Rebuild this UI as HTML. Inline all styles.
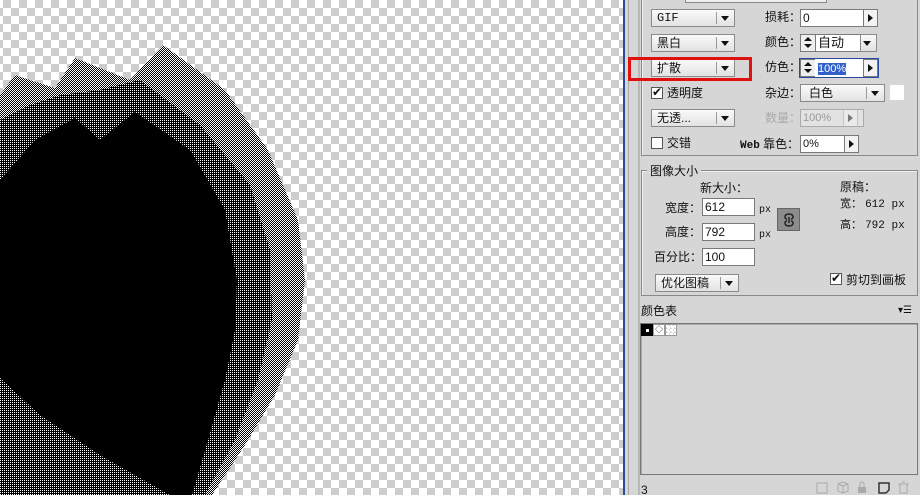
<!DOCTYPE html>
<html><head><meta charset="utf-8"><style>
*{margin:0;padding:0;box-sizing:border-box}
body{width:920px;height:495px;overflow:hidden;position:relative;font-family:"Liberation Sans","Noto Sans CJK SC",sans-serif;font-size:12px;color:#111}
.chk{position:absolute;left:0;top:0;width:623px;height:495px;background-color:#fff;background-image:linear-gradient(45deg,#cdcdcd 25%,transparent 25%,transparent 75%,#cdcdcd 75%),linear-gradient(45deg,#cdcdcd 25%,transparent 25%,transparent 75%,#cdcdcd 75%);background-size:16px 16px;background-position:-5px 0,3px 8px}
.panel{position:absolute;left:625px;top:0;width:295px;height:495px;background:#d6d6d6}
.a{position:absolute}
.grp{position:absolute;border:1px solid #8a8a8a;box-shadow:inset 1px 1px 0 #f0f0f0}
.dd{position:absolute;height:18px;border:1px solid #8a8a8a;background:linear-gradient(#fafafa,#e2e2e2);font-size:12px;line-height:16px;padding-left:5px}
.dd .sep{position:absolute;right:17px;top:2px;bottom:2px;width:1px;background:#999}
.dd .tri{position:absolute;right:5px;top:6px;width:0;height:0;border-left:4px solid transparent;border-right:4px solid transparent;border-top:5px solid #111}
.fld{position:absolute;height:18px;border:1px solid #7a7a7a;background:#fff;font-size:12px;line-height:16px;padding-left:2px}
.btn{position:absolute;width:15px;height:18px;border:1px solid #7a7a7a;background:#f2f2f2}
.btn:after{content:"";position:absolute;left:4px;top:4px;border-top:4px solid transparent;border-bottom:4px solid transparent;border-left:5px solid #111}
.lbl{position:absolute;font-size:12px;line-height:16px}
.spin{position:absolute;width:16px;height:18px;border:1px solid #7a7a7a;background:#eee}
.spin:before{content:"";position:absolute;left:3px;top:2px;border-left:4px solid transparent;border-right:4px solid transparent;border-bottom:4px solid #111}
.spin:after{content:"";position:absolute;left:3px;top:9px;border-left:4px solid transparent;border-right:4px solid transparent;border-top:4px solid #111}
.cb{position:absolute;width:12px;height:12px;border:1px solid #555;background:#fff;font-size:12px;line-height:9px;text-align:center}
</style></head><body>
<div class="chk"></div>
<svg class="a" style="left:0;top:0" width="623" height="495" shape-rendering="crispEdges">
<defs>
<pattern id="d1" width="2" height="2" patternUnits="userSpaceOnUse"><rect width="2" height="2" fill="#000"/><rect width="1" height="1" fill="#fff"/><rect x="1" y="1" width="1" height="1" fill="#fff"/></pattern>
<pattern id="d2" width="2" height="2" patternUnits="userSpaceOnUse"><rect width="2" height="2" fill="#000"/><rect width="1" height="1" fill="#fff"/></pattern>
</defs>
<path d="M0,95 L15,75 L55,88 L75,58 L130,80 L163,45 L225,90 L268,150 L298,220 L305,280 L298,340 L275,395 L245,445 L212,495 L0,495 Z" fill="url(#d1)"/>
<path d="M0,120 L30,105 L60,95 L100,90 L140,80 L200,125 L250,185 L270,250 L272,320 L258,380 L235,440 L205,495 L0,495 Z" fill="url(#d2)"/>
<path d="M0,180 L35,140 L75,118 L100,140 L135,112 L190,150 L225,210 L237,280 L235,330 L225,380 L208,440 L192,495 L170,495 L100,455 L40,415 L0,378 Z" fill="#000"/>
</svg>
<div class="a" style="left:623px;top:0;width:2px;height:495px;background:#2a4a9a"></div>
<div class="panel"></div>
<div class="a" style="left:628px;top:0;width:1px;height:495px;background:#a8a8a8"></div>
<div class="a" style="left:638px;top:0;width:2px;height:495px;background:#b8b8b8"></div>
<div class="a" style="left:685px;top:0;width:142px;height:3px;border:1px solid #8a8a8a;border-top:none;background:#eee"></div>

<div class="grp" style="left:641px;top:-2px;width:277px;height:158px"></div>
<div class="dd" style="left:651px;top:9px;width:84px;font-family:'Liberation Mono',monospace">GIF<span class="sep"></span><span class="tri"></span></div>
<div class="dd" style="left:651px;top:34px;width:84px">黑白<span class="sep"></span><span class="tri"></span></div>
<div class="dd" style="left:651px;top:59px;width:84px">扩散<span class="sep"></span><span class="tri"></span></div>
<div class="a" style="left:628px;top:57px;width:124px;height:24px;border:3px solid #e01010"></div>
<div class="cb" style="left:651px;top:87px">✔</div><div class="lbl" style="left:667px;top:85px">透明度</div>
<div class="dd" style="left:651px;top:109px;width:84px">无透...<span class="sep"></span><span class="tri"></span></div>
<div class="cb" style="left:651px;top:137px"></div><div class="lbl" style="left:667px;top:135px">交错</div>

<div class="lbl" style="left:765px;top:9px">损耗：</div>
<div class="fld" style="left:800px;top:9px;width:64px">0</div><div class="btn" style="left:863px;top:9px"></div>
<div class="lbl" style="left:765px;top:34px">颜色：</div>
<div class="spin" style="left:800px;top:34px"></div><div class="fld" style="left:815px;top:34px;width:46px;font-size:13px">自动</div>
<div class="dd" style="left:860px;top:34px;width:17px;padding:0"><span class="tri"></span></div>
<div class="lbl" style="left:765px;top:59px">仿色：</div>
<div class="a" style="left:799px;top:58px;width:80px;height:20px;border:1px solid #2a4aa0"></div>
<div class="spin" style="left:800px;top:59px"></div><div class="fld" style="left:815px;top:59px;width:49px;border-color:#fff"><span style="background:#3060c8;color:#fff;font-size:11px">100%</span></div><div class="btn" style="left:863px;top:59px"></div>
<div class="lbl" style="left:765px;top:85px">杂边：</div>
<div class="dd" style="left:800px;top:84px;width:85px;padding-left:8px">白色<span class="sep"></span><span class="tri"></span></div>
<div class="a" style="left:890px;top:85px;width:14px;height:15px;background:#fff"></div>
<div class="lbl" style="left:765px;top:110px;color:#aaa">数量：</div>
<div class="fld" style="left:800px;top:109px;width:64px;background:#e2e2e2;border-color:#aaa;color:#999;font-size:11px">100%</div><div class="btn" style="left:843px;top:109px;border-color:#aaa;opacity:.5"></div>
<div class="lbl" style="left:740px;top:136px"><span style="font-family:'Liberation Mono',monospace;font-size:11px;font-weight:bold">Web</span> 靠色：</div>
<div class="fld" style="left:800px;top:135px;width:45px;font-size:11px">0%</div><div class="btn" style="left:844px;top:135px"></div>

<div class="grp" style="left:641px;top:170px;width:277px;height:126px"></div>
<div class="lbl" style="left:647px;top:163px;background:#d6d6d6;padding:0 3px">图像大小</div>
<div class="lbl" style="left:700px;top:180px">新大小：</div>
<div class="lbl" style="left:665px;top:200px">宽度：</div><div class="fld" style="left:702px;top:198px;width:53px">612</div><div class="lbl" style="left:759px;top:203px;font-size:10px;font-family:'Liberation Mono',monospace">px</div>
<div class="lbl" style="left:665px;top:224px">高度：</div><div class="fld" style="left:702px;top:223px;width:53px">792</div><div class="lbl" style="left:759px;top:228px;font-size:10px;font-family:'Liberation Mono',monospace">px</div>
<div class="lbl" style="left:654px;top:249px">百分比：</div><div class="fld" style="left:702px;top:248px;width:53px">100</div>
<div class="a" style="left:777px;top:208px;width:23px;height:23px;background:#8c8c8c;border:1px solid #666"></div>
<svg class="a" style="left:783px;top:212px" width="12" height="16"><path d="M4,7 C1,7 1,2 6,2 C11,2 11,7 8,7 M4,9 C1,9 1,14 6,14 C11,14 11,9 8,9 M6,5 V11" fill="none" stroke="#222" stroke-width="1.5"/></svg>
<div class="lbl" style="left:840px;top:179px">原稿：</div>
<div class="lbl" style="left:840px;top:196px;font-size:11px">宽： <span style="font-family:'Liberation Mono',monospace">612 px</span></div>
<div class="lbl" style="left:840px;top:217px;font-size:11px">高： <span style="font-family:'Liberation Mono',monospace">792 px</span></div>
<div class="dd" style="left:655px;top:274px;width:84px">优化图稿<span class="sep"></span><span class="tri"></span></div>
<div class="cb" style="left:830px;top:273px">✔</div><div class="lbl" style="left:846px;top:272px">剪切到画板</div>

<div class="lbl" style="left:641px;top:303px">颜色表</div>
<div class="lbl" style="left:898px;top:303px;font-size:10px">▾☰</div>
<div class="a" style="left:640px;top:323px;width:278px;height:152px;border:1px solid #777;box-shadow:inset 1px 1px 0 #aaa"></div>
<div class="a" style="left:641px;top:324px;width:12px;height:12px;background:#000"><div class="a" style="left:5px;top:5px;width:3px;height:3px;background:#fff"></div></div>
<div class="a" style="left:653px;top:324px;width:12px;height:12px;background:#fff;border:1px solid #999;font-size:8px;text-align:center;line-height:10px">◇</div>
<div class="a" style="left:665px;top:324px;width:12px;height:12px;background:#fff;border:1px solid #999;background-image:linear-gradient(45deg,#ccc 25%,transparent 25%,transparent 75%,#ccc 75%);background-size:4px 4px"></div>
<div class="lbl" style="left:641px;top:482px">3</div>
<svg class="a" style="left:815px;top:481px" width="100" height="14">
<rect x="2" y="2" width="10" height="10" fill="none" stroke="#aaa"/>
<path d="M23,3 L28,1 L33,3 L33,10 L28,12 L23,10 Z M23,3 L28,5 L33,3 M28,5 L28,12" fill="none" stroke="#aaa"/>
<rect x="43" y="6" width="8" height="6" fill="#aaa"/><path d="M45,6 V3 a2,2 0 0 1 4,0 V6" fill="none" stroke="#aaa"/>
<path d="M64,2 H74 V9 L71,12 H64 Z" fill="none" stroke="#333" stroke-width="1.5"/>
<path d="M83,3 H94 M85,3 V12 H92 V3 M87,1 H90" fill="none" stroke="#aaa"/>
</svg>
</body></html>
